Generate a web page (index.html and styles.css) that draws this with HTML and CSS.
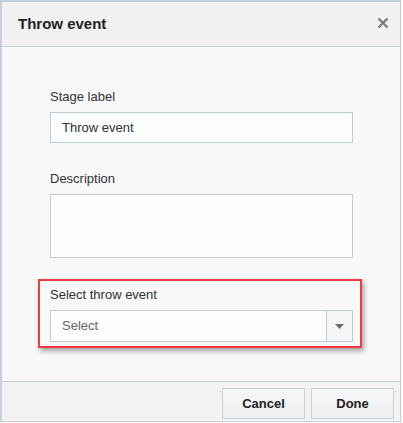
FILE: index.html
```html
<!DOCTYPE html>
<html>
<head>
<meta charset="utf-8">
<link rel="stylesheet" href="styles.css">
</head>
<body>
<div class="dialog">
  <div class="header">
    <span class="title">Throw event</span>
    <svg class="close" width="12" height="12" viewBox="0 0 12 12"><path d="M1.5 1.5 L10.5 10.5 M10.5 1.5 L1.5 10.5" stroke="#7d7d7d" stroke-width="2.4" stroke-linecap="butt"/></svg>
  </div>
  <div class="body">
    <div class="field">
      <div class="label">Stage label</div>
      <div class="input">Throw event</div>
    </div>
    <div class="field gap">
      <div class="label">Description</div>
      <div class="textarea"></div>
    </div>
    <div class="highlight">
      <div class="label">Select throw event</div>
      <div class="select">
        <span class="select-text">Select</span>
        <span class="select-btn"><svg width="9" height="5" viewBox="0 0 9 5"><path d="M0 0 L9 0 L4.5 5 Z" fill="#6b6b6b"/></svg></span>
      </div>
    </div>
  </div>
  <div class="footer">
    <button class="btn">Cancel</button>
    <button class="btn">Done</button>
  </div>
</div>
</body>
</html>
```
FILE: styles.css
```css
html, body {
  margin: 0;
  padding: 0;
  background: #f7f8f9;
}
body {
  font-family: "Liberation Sans", Arial, sans-serif;
  color: #333;
}
.dialog {
  box-sizing: border-box;
  width: 401px;
  height: 422px;
  border-style: solid;
  border-color: #c6d0d9;
  border-width: 2px 1px 1px 2px;
  display: flex;
  flex-direction: column;
  background: #f8f8f8;
}
.header {
  height: 44px;
  border-bottom: 1px solid #c6d0d9;
  background: #f1f1f1;
  display: flex;
  align-items: center;
  justify-content: space-between;
  padding: 0 11px 0 16px;
}
.title {
  font-size: 15px;
  font-weight: bold;
  color: #222;
  margin-top: -2px;
}
.close {
  margin-top: -2px;
}
.body {
  flex: 1;
  padding: 42px 0 0 48px;
}
.label {
  font-size: 13px;
  line-height: 16px;
  color: #333;
  margin-bottom: 7px;
}
.input {
  box-sizing: border-box;
  width: 303px;
  height: 31px;
  border: 1px solid #c2ccd6;
  background: #fcfdfe;
  font-size: 13px;
  line-height: 29px;
  padding-left: 11px;
  color: #333;
}
.gap {
  margin-top: 28px;
}
.textarea {
  box-sizing: border-box;
  width: 303px;
  height: 64px;
  border: 1px solid #c2ccd6;
  background: #fcfdfe;
}
.highlight {
  margin: 21px 0 0 -12px;
  width: 324px;
  box-sizing: border-box;
  border: 2px solid #f03a45;
  padding: 6px 8px 4px 10px;
  box-shadow: 2px 3px 5px rgba(0, 0, 0, 0.35);
}
.select {
  box-sizing: border-box;
  width: 303px;
  height: 32px;
  border: 1px solid #c2ccd6;
  background: #fcfdfe;
  display: flex;
}
.select-text {
  flex: 1;
  font-size: 13px;
  line-height: 30px;
  padding-left: 11px;
  color: #666;
}
.select-btn {
  width: 25px;
  border-left: 1px solid #c2ccd6;
  background: #f4f5f6;
  display: flex;
  align-items: center;
  justify-content: center;
}
.footer {
  box-sizing: border-box;
  height: 40px;
  border-top: 1px solid #c6d0d9;
  background: #f2f2f2;
  display: flex;
  justify-content: flex-end;
  align-items: flex-start;
  gap: 6px;
  padding: 6px 6px 0 0;
}
.btn {
  width: 83px;
  height: 31px;
  border: 1px solid #c8cfd6;
  background: linear-gradient(#f6f7f8, #eceef0);
  font-family: "Liberation Sans", Arial, sans-serif;
  font-size: 13px;
  font-weight: bold;
  color: #222;
  padding: 0;
}
```
